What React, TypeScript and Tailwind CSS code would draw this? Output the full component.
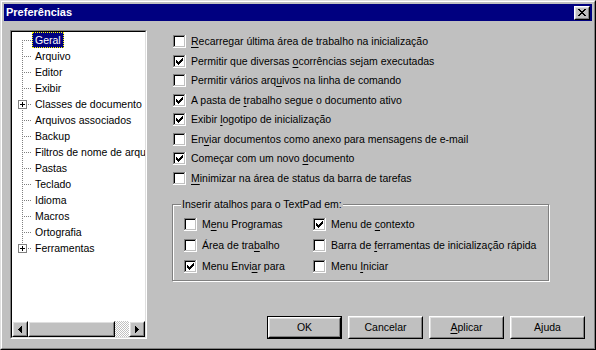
import React from "react";

const face = "bg-[#c0c0c0]";

function Label({ t }: { t: string }) {
  const i = t.indexOf("&");
  if (i < 0) return <>{t}</>;
  return (
    <>
      {t.slice(0, i)}
      <span className="underline underline-offset-[2px]">{t[i + 1]}</span>
      {t.slice(i + 2)}
    </>
  );
}

const checkPx = [
  [6, 0],
  [5, 1], [6, 1],
  [0, 2], [4, 2], [5, 2], [6, 2],
  [0, 3], [1, 3], [3, 3], [4, 3], [5, 3],
  [0, 4], [1, 4], [2, 4], [3, 4], [4, 4],
  [1, 5], [2, 5], [3, 5],
  [2, 6],
];

function Box({ checked }: { checked?: boolean }) {
  return (
    <svg width="13" height="13" viewBox="0 0 13 13" shapeRendering="crispEdges" className="shrink-0">
      <rect x="0" y="0" width="13" height="13" fill="#fff" />
      <rect x="0" y="0" width="12" height="1" fill="#808080" />
      <rect x="0" y="0" width="1" height="12" fill="#808080" />
      <rect x="1" y="1" width="11" height="11" fill="#c0c0c0" />
      <rect x="1" y="1" width="10" height="1" fill="#000" />
      <rect x="1" y="1" width="1" height="10" fill="#000" />
      <rect x="2" y="2" width="9" height="9" fill="#fff" />
      {checked && checkPx.map(([x, y]) => <rect key={`${x}-${y}`} x={3 + x} y={3 + y} width="1" height="1" fill="#000" />)}
    </svg>
  );
}

function Check({ label, checked }: { label: string; checked?: boolean }) {
  return (
    <div className="flex h-[13px] items-center gap-[5px] whitespace-nowrap">
      <Box checked={checked} />
      <span>
        <Label t={label} />
      </span>
    </div>
  );
}

function Raised({ children, className = "" }: { children?: React.ReactNode; className?: string }) {
  return (
    <div className={`border border-t-white border-l-white border-r-black border-b-black ${className}`}>
      <div className="flex h-full w-full items-center justify-center border border-t-[#dfdfdf] border-l-[#dfdfdf] border-r-[#808080] border-b-[#808080]">
        {children}
      </div>
    </div>
  );
}

function Button({ label, def }: { label: string; def?: boolean }) {
  if (def)
    return (
      <div className="h-[23px] w-[75px] border border-black">
        <Raised className="h-full w-full">
          <Label t={label} />
        </Raised>
      </div>
    );
  return (
    <Raised className="h-[23px] w-[75px]">
      <Label t={label} />
    </Raised>
  );
}

type Item = { name: string; plus?: boolean };
const tree: Item[] = [
  { name: "Geral" },
  { name: "Arquivo" },
  { name: "Editor" },
  { name: "Exibir" },
  { name: "Classes de documento", plus: true },
  { name: "Arquivos associados" },
  { name: "Backup" },
  { name: "Filtros de nome de arquivo" },
  { name: "Pastas" },
  { name: "Teclado" },
  { name: "Idioma" },
  { name: "Macros" },
  { name: "Ortografia" },
  { name: "Ferramentas", plus: true },
];

function Connector({ first, last, plus }: { first?: boolean; last?: boolean; plus?: boolean }) {
  const dots: [number, number][] = [];
  const y0 = first ? 8 : 0;
  const y1 = last ? 8 : 15;
  for (let y = y0; y <= y1; y++) if (y % 2 === 0) dots.push([10, y]);
  for (let x = 11; x <= 19; x++) if (x % 2 === 0) dots.push([x, 8]);
  return (
    <svg width="20" height="16" viewBox="0 0 20 16" shapeRendering="crispEdges" className="shrink-0">
      {dots.map(([x, y]) => (
        <rect key={`${x}-${y}`} x={x} y={y} width="1" height="1" fill="#808080" />
      ))}
      {plus && (
        <>
          <rect x="6" y="4" width="9" height="9" fill="#808080" />
          <rect x="7" y="5" width="7" height="7" fill="#fff" />
          <rect x="8" y="8" width="5" height="1" fill="#000" />
          <rect x="10" y="6" width="1" height="5" fill="#000" />
        </>
      )}
    </svg>
  );
}

function Arrow({ dir }: { dir: "l" | "r" }) {
  return (
    <svg width="4" height="7" viewBox="0 0 4 7" shapeRendering="crispEdges">
      {dir === "l" ? <polygon points="4,0 0,3.5 4,7" fill="#000" /> : <polygon points="0,0 4,3.5 0,7" fill="#000" />}
    </svg>
  );
}

export default function App() {
  return (
    <div className="h-[350px] w-[596px] font-['Liberation_Sans',Arial,sans-serif] text-[10.5px] leading-none text-black">
      <div className="h-full w-full border border-t-[#dfdfdf] border-l-[#dfdfdf] border-r-black border-b-black">
        <div className={`flex h-full w-full flex-col border border-t-white border-l-white border-r-[#808080] border-b-[#808080] p-[2px] ${face}`}>
          {/* title bar */}
          <div className="flex h-[18px] items-center justify-between bg-[#000080] pl-[2px] pr-[2px]">
            <span className="text-[11px] font-bold text-white">Preferências</span>
            <Raised className={`h-[14px] w-[16px] ${face}`}>
              <svg width="8" height="7" viewBox="0 0 8 7" shapeRendering="crispEdges">
                {[0, 1, 2, 3, 4, 5, 6].map((i) => (
                  <g key={i}>
                    <rect x={i} y={i} width="2" height="1" fill="#000" />
                    <rect x={6 - i} y={i} width="2" height="1" fill="#000" />
                  </g>
                ))}
              </svg>
            </Raised>
          </div>

          <div className="mt-[9px] flex flex-1 pl-[6px] pr-[7px] pb-[7px]">
            {/* tree panel */}
            <div className="h-[309px] w-[137px] shrink-0 border border-t-[#808080] border-l-[#808080] border-r-white border-b-white">
              <div className="flex h-full w-full flex-col overflow-hidden border border-t-black border-l-black border-r-[#dfdfdf] border-b-[#dfdfdf] bg-white">
                <div className="flex flex-1 flex-col">
                  {tree.map((it, i) => (
                    <div key={it.name} className="flex h-[16px] items-center whitespace-nowrap">
                      <Connector first={i === 0} last={i === tree.length - 1} plus={it.plus} />
                      <span
                        className={`flex h-[16px] items-center border px-[2px] ${
                          i === 0 ? "border-dotted border-[#ffff00] bg-[#000080] text-white" : "border-transparent"
                        }`}
                      >
                        {it.name}
                      </span>
                    </div>
                  ))}
                </div>
                {/* horizontal scrollbar */}
                <div className="flex h-[16px] shrink-0">
                  <Raised className={`h-[16px] w-[16px] ${face}`}>
                    <Arrow dir="l" />
                  </Raised>
                  <Raised className={`h-[16px] w-[87px] ${face}`} />
                  <div className="h-[16px] flex-1 bg-[repeating-conic-gradient(#ffffff_0_25%,#c0c0c0_0_50%)] bg-[length:2px_2px]" />
                  <Raised className={`h-[16px] w-[16px] ${face}`}>
                    <Arrow dir="r" />
                  </Raised>
                </div>
              </div>
            </div>

            {/* right side */}
            <div className="flex h-[309px] flex-1 flex-col">
              <div className="ml-[26px] mt-[5px] flex flex-col gap-[6.5px]">
                <Check label="&Recarregar última área de trabalho na inicialização" />
                <Check label="Permitir que diversas &ocorrências sejam executadas" checked />
                <Check label="Permitir vários arq&uivos na linha de comando" />
                <Check label="A pasta de &trabalho segue o documento ativo" checked />
                <Check label="Exibir &logotipo de inicialização" checked />
                <Check label="En&viar documentos como anexo para mensagens de e-mail" />
                <Check label="Começar com um novo &documento" checked />
                <Check label="&Minimizar na área de status da barra de tarefas" />
              </div>

              <div className="ml-[25px] mt-[19px] h-[77px] w-[377px] border border-[#808080] shadow-[inset_1px_1px_0_#fff,1px_1px_0_#fff]">
                <div className="-mt-[6px] ml-[8px] w-max bg-[#c0c0c0] px-[1px] leading-[11px]">Inserir atalhos para o TextPad em:</div>
                <div className="ml-[11px] mt-[8px] flex gap-[16px]">
                  <div className="flex w-[113px] flex-col gap-[8px]">
                    <Check label="M&enu Programas" />
                    <Check label="Área de tra&balho" />
                    <Check label="Menu Envi&ar para" checked />
                  </div>
                  <div className="flex flex-col gap-[8px]">
                    <Check label="Menu de &contexto" checked />
                    <Check label="Barra de &ferramentas de inicialização rápida" />
                    <Check label="Menu &Iniciar" />
                  </div>
                </div>
              </div>

              <div className="mt-auto flex justify-end gap-[6px]">
                <Button label="OK" def />
                <Button label="Cancelar" />
                <Button label="&Aplicar" />
                <Button label="Ajuda" />
              </div>
            </div>
          </div>
        </div>
      </div>
    </div>
  );
}
